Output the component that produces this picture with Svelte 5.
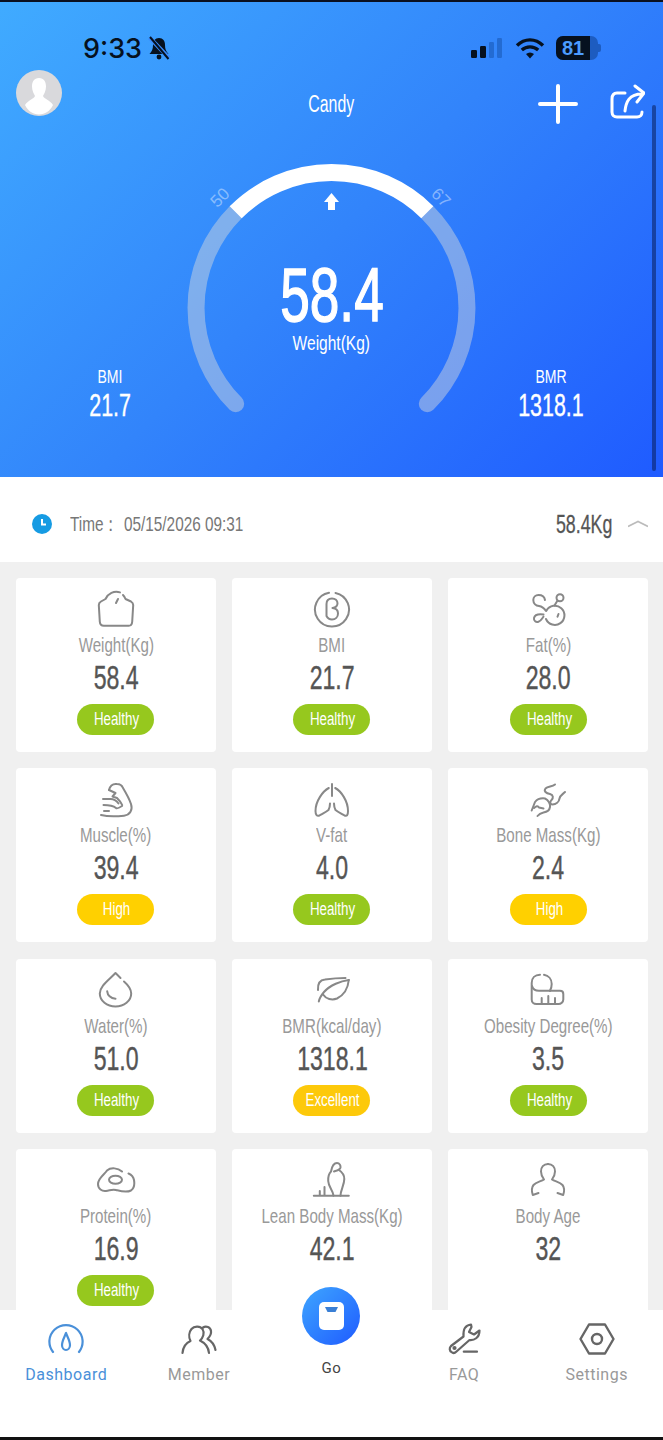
<script lang="ts">
	const metrics = [
		{ icon: 'weight', label: 'Weight(Kg)', value: '58.4', status: 'Healthy', tone: 'green' },
		{ icon: 'bmi', label: 'BMI', value: '21.7', status: 'Healthy', tone: 'green' },
		{ icon: 'fat', label: 'Fat(%)', value: '28.0', status: 'Healthy', tone: 'green' },
		{ icon: 'muscle', label: 'Muscle(%)', value: '39.4', status: 'High', tone: 'yellow' },
		{ icon: 'lungs', label: 'V-fat', value: '4.0', status: 'Healthy', tone: 'green' },
		{ icon: 'bone', label: 'Bone Mass(Kg)', value: '2.4', status: 'High', tone: 'yellow' },
		{ icon: 'water', label: 'Water(%)', value: '51.0', status: 'Healthy', tone: 'green' },
		{ icon: 'leaf', label: 'BMR(kcal/day)', value: '1318.1', status: 'Excellent', tone: 'amber' },
		{ icon: 'tape', label: 'Obesity Degree(%)', value: '3.5', status: 'Healthy', tone: 'green' },
		{ icon: 'egg', label: 'Protein(%)', value: '16.9', status: 'Healthy', tone: 'green' },
		{ icon: 'lean', label: 'Lean Body Mass(Kg)', value: '42.1', status: '', tone: '' },
		{ icon: 'age', label: 'Body Age', value: '32', status: '', tone: '' }
	];
</script>

{#snippet metricIcon(name: string)}
	<svg class="metric-icon" viewBox="0 0 40 40" fill="none" stroke="#888" stroke-width="2" stroke-linecap="round" stroke-linejoin="round">
		{#if name === 'weight'}
			<path d="M24 3.4C18 1.5 12 4.5 9.5 10L5 12.5C3.4 13.4 2.8 14.4 2.8 16L3.8 32.7C4 35.4 5.5 36.7 7.8 36.7H32.8C35 36.7 36 35.4 36.2 32.7L37.2 16C37.2 14.4 36.5 13.4 35 12.5L29.5 10C29 8.5 28 7 27 6" />
			<path d="M22 10 20 14" />
		{:else if name === 'bmi'}
			<path d="M23.5 3.9A17 17 0 1 1 17 3.8" />
			<path d="M14.5 27V15C14.5 11 17 9.5 20 9.5C23.2 9.5 25.5 11.5 25.5 14.3C25.5 16.8 23.6 18.6 20.5 19C23.8 19.3 26 21.3 26 24.5C26 28 23.4 30.5 20 30.5C17.4 30.5 15.5 29 14.5 27Z" />
		{:else if name === 'fat'}
			<path d="M17 11C16.5 8 14 6 10.5 6C7.5 6 5.3 8 5.3 11C5.3 14.5 8 16.7 11 17C14 17.5 16 19 18 22" />
			<path d="M15.5 25.5C12 25 7 25 6 29C5.5 32 8 33.5 10.5 32.7C13 32 14 29.5 15.5 27.7" />
			<path d="M18.5 21.5A9.6 9.6 0 1 1 18 30" />
			<circle cx="32" cy="8.7" r="3.5" />
			<path d="M29.5 11.5 26.5 16.5M30.5 25 29.5 27.7" />
		{:else if name === 'muscle'}
			<path d="M13 11C14 7 17 4.5 21 5C24 5 26 6.5 27 9C30 14 33 19 35 25C37 31 34 36 28 36.7C21 37.5 11 37.5 5 36" />
			<path d="M13 11 19.5 14 16.5 17.5 21 19C23 21 25 23 26.2 26" />
			<path d="M7 20H14.5C17 20 20 21 22.5 24.5M7.5 26C12 26 17 26.5 20 29C21 30 23 29 26 27M8 32H13" />
		{:else if name === 'lungs'}
			<path d="M20 5V17" />
			<path d="M16.8 9C11 12 3.5 22 3.5 32C3.5 36 5 37.5 7.5 36.5C10 35 14 33 16.5 31C17.5 29 18 27 18 24.5" />
			<path d="M23.2 9C29 12 36 22 36 32C36 36 35 37.5 32.5 36.5C30 35 26 33 23.5 31C22.5 29 22 27 22 24.5" />
		{:else if name === 'bone'}
			<path d="M27 5.5C24 8 20 7 17.5 9.5C15.5 12 18 14.5 22 15C25.5 16 25.5 19 23.5 21C21.5 23 22 25.5 24.5 25.5C28 25.5 31 23 31.5 19.5C32 16.5 34.5 15.5 37 13" />
			<path d="M3.7 31.5 7 23C9 20.5 13 19 17 19.5C20.5 21 22.5 25 22 28C21.5 31.5 19 33 15.5 33.5C13 34 11 35 9.5 37" />
			<path d="M6 29C8 27 10 26.5 11 28.5L15.5 29.5" />
		{:else if name === 'water'}
			<path d="M28 11.5C32 15 35.2 19 35.2 23.5C35.2 31 28 36.5 19.5 36.5C11 36.5 3.8 31 3.8 23.5C3.8 16 13 10 19.5 3L24.5 8" />
			<path d="M11.2 21.3C11.5 25 14.5 28.5 19.5 28.7" />
		{:else if name === 'leaf'}
			<path d="M6 20C5.5 13 8 10 13 9.5C20 8.5 27 8 33.5 8" />
			<path d="M36.8 10C29 11 18 15 12 22C9.5 25 7.5 28 6.8 31.5" />
			<path d="M36.8 10C36 18 32 25 25 28.5C20 30.5 14 29 11 24.5" />
		{:else if name === 'tape'}
			<path d="M12 4.7C7 4.7 3.7 8 3.7 13V29.5C3.7 32 5.5 34 8.5 34H30.5C33 34 35.3 32 35.3 29.5V24C35.3 22 34 20.8 32 20.8H22" />
			<path d="M16 4.8C20.5 5.5 23.7 9 23.7 14C23.7 17 23 19 22 20.8" />
			<path d="M4 16C5 19.5 8 20.8 11 20.8H22M13.7 34V28M20.3 34V26M27 34V28" />
		{:else if name === 'egg'}
			<path d="M26 11.5C22 8 15 7 11 10.5C9 14 2 18 2 24C2 29 6 31.5 10 31C14 30.5 16 29 20 30C24 31 30 33 35 30.5C39 28 38.5 23 38 20C37.5 17 36 15 32.5 13.5" />
			<ellipse cx="19.5" cy="19.7" rx="6.5" ry="4" />
		{:else if name === 'lean'}
			<path d="M21.5 35.7C21 30 16.5 27 16.2 21C16 16 17.5 13 19 11.5C20 6 22 3 25 3C27.5 3 28.8 5.5 28.5 7.5C28 10 25 10.5 22 11.5" />
			<path d="M27 10C30 12 32.3 15 32.3 19C32.3 25 28.5 30 28.5 35.7" />
			<path d="M1.8 35.7H36.8M7.8 35.7V31M12.5 35.7V27" />
		{:else if name === 'age'}
			<path d="M20 4C15.5 4 13 7.5 13 11.5C13 15 14.5 17.5 16 19.5C13 21.5 8 22 5.5 25C3.5 27.5 3.5 31 4.8 35L10.5 33" />
			<path d="M20 4C24.5 4 27 7.5 27 11.5C27 15 25.5 17.5 24 19.5C27 21.5 32 22 34.5 25C36.5 27.5 36.5 31 35.2 35L29.5 33" />
		{/if}
	</svg>
{/snippet}

<div class="page">
	<section class="hero">
		<div class="status">
			<div class="status-left">
				<span class="clock-text">9:33</span>
				<svg width="24" height="24" viewBox="0 0 24 24">
					<path d="M12 2C8 2 6 5 6 9C6 13 5 15 2.5 18H21.5C19 15 18 13 18 9C18 5 16 2 12 2Z" fill="#06111f" />
					<circle cx="12" cy="21" r="2.4" fill="#06111f" />
					<path d="M2.5 1.5 22 22" stroke="#3a8cff" stroke-width="4" />
					<path d="M3 1 21.5 23" stroke="#06111f" stroke-width="2" />
				</svg>
			</div>
			<div class="status-right">
				<svg width="34" height="22" viewBox="0 0 34 22">
					<rect x="1" y="13" width="6" height="8" rx="1.2" fill="#06111f" />
					<rect x="10" y="9" width="6" height="12" rx="1.2" fill="#06111f" />
					<rect x="19" y="5" width="5" height="16" rx="1.2" fill="#1d5fc0" opacity=".7" />
					<rect x="27" y="1" width="5" height="20" rx="1.2" fill="#1d5fc0" opacity=".7" />
				</svg>
				<svg width="30" height="22" viewBox="0 0 30 22" fill="none" stroke="#06111f" stroke-width="3.4">
					<path d="M2 8.5C9.5 1 20.5 1 28 8.5M6.8 13C11.5 8.8 18.5 8.8 23.2 13" />
					<path d="M11 17C13.5 15 16.5 15 19 17L15 21.5Z" fill="#06111f" stroke="none" />
				</svg>
				<div class="battery"><span class="battery-fill">81</span></div>
				<span class="battery-cap"></span>
			</div>
		</div>

		<div class="nav">
			<div class="avatar">
				<svg width="46" height="46" viewBox="0 0 46 46">
					<circle cx="23" cy="23" r="23" fill="#d9d9dc" />
					<path d="M23 8C18 8 16 12 16 16.5C16 21 18 24 19 26C18 29 12 30 9 35C12 41 17 44.5 23 44.5C29 44.5 34 41 37 35C34 30 28 29 27 26C28 24 30 21 30 16.5C30 12 28 8 23 8Z" fill="#fff" />
				</svg>
			</div>
			<span class="name"><span class="din">Candy</span></span>
			<div class="nav-actions">
				<svg width="40" height="40" viewBox="0 0 40 40" stroke="#fff" stroke-width="4" stroke-linecap="round">
					<path d="M20 2V38M2 20H38" />
				</svg>
				<svg width="36" height="38" viewBox="0 0 36 38" fill="none" stroke="#fff" stroke-width="3" stroke-linecap="round" stroke-linejoin="round">
					<path d="M16 9H8C5 9 3 11 3 15V28C3 31 5 33 8 33H28C31 33 33 31 33 28" />
					<path d="M16 27C17 18 20 10 33 10M26 2 35 9 28 18" />
				</svg>
			</div>
		</div>

		<div class="summary">
			<div class="side">
				<span class="side-label"><span class="din">BMI</span></span>
				<span class="side-value"><span class="din">21.7</span></span>
			</div>
			<div class="gauge">
				<svg width="320" height="280" viewBox="0 0 320 280" fill="none" stroke-width="17">
					<path d="M63.7 257.8A135.5 135.5 0 0 1 63.7 66.2" stroke="#dcdcdc" stroke-opacity=".45" stroke-linecap="round" />
					<path d="M255.3 66.2A135.5 135.5 0 0 1 255.3 257.8" stroke="#dcdcdc" stroke-opacity=".45" stroke-linecap="round" />
					<path d="M63.7 66.2A135.5 135.5 0 0 1 255.3 66.2" stroke="#fff" />
					<path d="M159.5 47 167 56H163V64H156V56H152Z" fill="#fff" stroke="none" />
				</svg>
				<span class="mark mark-low">50</span>
				<span class="mark mark-high">67</span>
				<div class="reading">
					<span class="reading-value"><span class="din">58.4</span></span>
					<span class="reading-label"><span class="din">Weight(Kg)</span></span>
				</div>
			</div>
			<div class="side">
				<span class="side-label"><span class="din">BMR</span></span>
				<span class="side-value"><span class="din">1318.1</span></span>
			</div>
		</div>
		<span class="scrollbar"></span>
	</section>

	<section class="time-row">
		<svg width="20" height="20" viewBox="0 0 20 20">
			<circle cx="10" cy="10" r="10" fill="#169be3" />
			<path d="M10 5V10.5H14" fill="none" stroke="#fff" stroke-width="2" />
		</svg>
		<span class="time-label"><span class="din-left">Time：</span></span>
		<span class="time-date"><span class="din-left">05/15/2026 09:31</span></span>
		<span class="time-weight"><span class="din-right">58.4Kg</span></span>
		<svg width="20" height="8" viewBox="0 0 20 8" fill="none" stroke="#bbb" stroke-width="1.6">
			<path d="M0 6.5 10 1.5 20 6.5" />
		</svg>
	</section>

	<section class="grid-wrap">
		<div class="grid">
			{#each metrics as m}
				<article class="card">
					{@render metricIcon(m.icon)}
					<span class="card-label"><span class="din">{m.label}</span></span>
					<span class="card-value"><span class="din">{m.value}</span></span>
					{#if m.status}
						<span class="pill {m.tone}"><span class="din">{m.status}</span></span>
					{/if}
				</article>
			{/each}
		</div>
	</section>

	<nav class="tabs">
		<div class="tab active">
			<svg width="36" height="36" viewBox="0 0 36 36" fill="none" stroke="#4a90d9" stroke-width="2.2" stroke-linecap="round" stroke-linejoin="round">
				<path d="M5 29A16.6 16.6 0 1 1 31 29" />
				<path d="M18 10C16.5 14 14 18 14 22C14 25 16 27 18 27C20 27 22 25 22 22C22 18 19.5 14 18 10Z" />
			</svg>
			<span>Dashboard</span>
		</div>
		<div class="tab">
			<svg width="36" height="36" viewBox="0 0 36 36" fill="none" stroke="#666" stroke-width="2.2" stroke-linecap="round" stroke-linejoin="round">
				<path d="M1.5 30C2 24 5 20 9.5 18C7.5 14 8 9 10.5 6C13 3 19 2.5 21.5 6C24 10 22 15 19 17.5C24 20 27.5 24 28 30" />
				<path d="M22 4.5C25 2.5 29.5 4 30 8C30.5 11.5 28.5 14 26.5 16C30.5 18 33.5 22 34.5 27" />
			</svg>
			<span>Member</span>
		</div>
		<div class="tab go">
			<div class="go-button">
				<svg width="25" height="28" viewBox="0 0 25 28">
					<rect width="25" height="28" rx="5" fill="#fff" />
					<path d="M6 5H19L16.5 10H8.5Z" fill="#3a7fd5" />
				</svg>
			</div>
			<span>Go</span>
		</div>
		<div class="tab">
			<svg width="36" height="36" viewBox="0 0 36 36" fill="none" stroke="#666" stroke-width="2.2" stroke-linecap="round" stroke-linejoin="round">
				<path d="M25 1.5C20 2 17 6 17.5 13.5L5 23C3 25 3.5 28 5.5 29C7 30.5 9 30 10.5 28.5L23.5 17C28 17.5 33.5 15 33.5 7.5L28 11.5L23 9L25.5 4Z" />
				<circle cx="8.5" cy="25" r="1" />
				<path d="M17.8 28.7H31" />
			</svg>
			<span>FAQ</span>
		</div>
		<div class="tab">
			<svg width="36" height="36" viewBox="0 0 36 36" fill="none" stroke="#666" stroke-width="2.4" stroke-linejoin="round">
				<path d="M10 1.5H26L34.5 16L26 30.5H10L1.5 16Z" />
				<circle cx="18" cy="16" r="5" />
			</svg>
			<span>Settings</span>
		</div>
	</nav>
</div>

<style>
	:global(body) {
		margin: 0;
		background: #fff;
	}

	.page {
		display: flex;
		flex-direction: column;
		height: 1440px;
		overflow: hidden;
		font-family: 'Liberation Sans', sans-serif;
		border-top: 2px solid #0a1020;
		border-bottom: 3px solid #111;
		box-sizing: border-box;
	}

	/* No condensed face is installed, so the DIN look comes from squeezing Liberation Sans. */
	.din,
	.din-left,
	.din-right {
		display: inline-block;
		white-space: nowrap;
		transform: scaleX(0.74);
	}

	.din-left {
		transform-origin: left center;
	}

	.din-right {
		transform-origin: right center;
	}

	.hero {
		position: relative;
		flex: none;
		display: flex;
		flex-direction: column;
		height: 475px;
		background: linear-gradient(135deg, #40abff 0%, #3284fb 50%, #1f5bff 100%);
		color: #fff;
	}

	.status {
		display: flex;
		justify-content: space-between;
		align-items: center;
		height: 30px;
		margin-top: 31px;
		padding: 0 62px 0 83px;
	}

	.status-left {
		display: flex;
		align-items: center;
		gap: 5px;
	}

	.clock-text {
		font-family: 'Inter', sans-serif;
		font-size: 27px;
		font-weight: 500;
		color: #06111f;
	}

	.status-right {
		display: flex;
		align-items: center;
		gap: 10px;
	}

	.status-right svg:first-child {
		margin-right: 1px;
	}

	.battery {
		width: 42px;
		height: 24px;
		border-radius: 7px;
		overflow: hidden;
		background: #1d5cc0;
		margin-left: 1px;
	}

	.battery-fill {
		display: block;
		width: 34px;
		height: 24px;
		background: #06111f;
		color: #4c9cff;
		font-size: 20px;
		font-weight: 700;
		line-height: 24px;
		text-align: center;
	}

	.battery-cap {
		width: 3px;
		height: 8px;
		margin-left: -10px;
		border-radius: 0 2px 2px 0;
		background: #1d5cc0;
	}

	.nav {
		display: grid;
		grid-template-columns: 1fr auto 1fr;
		align-items: start;
		padding: 7px 16px 0;
		height: 56px;
	}

	.avatar {
		height: 46px;
	}

	.name {
		margin-top: 21px;
		font-size: 23px;
	}

	.name .din {
		transform: scaleX(0.69);
	}

	.nav-actions {
		display: flex;
		justify-content: flex-end;
		gap: 31px;
		margin: 14px 2px 0 0;
	}

	.summary {
		display: grid;
		grid-template-columns: 1fr 320px 1fr;
		margin-top: 20px;
	}

	.side {
		display: flex;
		flex-direction: column;
		align-items: center;
		margin-top: 221px;
		line-height: 1;
	}

	.summary .side:first-child {
		padding-left: 48px;
	}

	.summary .side:last-child {
		padding-right: 52px;
	}

	.side-label {
		font-size: 19px;
	}

	.side-value {
		margin-top: 3px;
		font-size: 32px;
		-webkit-text-stroke: 0.4px #fff;
	}

	.side-value .din {
		transform: scaleX(0.67);
	}

	.gauge {
		position: relative;
		height: 280px;
	}

	.gauge svg {
		display: block;
	}

	.mark {
		position: absolute;
		font-size: 17px;
		color: rgba(255, 255, 255, 0.42);
	}

	.mark-low {
		left: 39px;
		top: 42px;
		transform: rotate(-45deg);
	}

	.mark-high {
		left: 259px;
		top: 42px;
		transform: rotate(45deg);
	}

	.reading {
		position: absolute;
		inset: 0;
		display: flex;
		flex-direction: column;
		align-items: center;
		padding-top: 114px;
	}

	.reading-value {
		font-size: 76px;
		line-height: 70px;
		-webkit-text-stroke: 1.4px #fff;
	}

	.reading-value .din {
		transform: scaleX(0.7);
	}

	.reading-label {
		font-size: 21px;
		line-height: 26px;
	}

	.scrollbar {
		position: absolute;
		right: 7px;
		top: 103px;
		bottom: 6px;
		width: 4px;
		border-radius: 2px;
		background: rgba(10, 30, 90, 0.55);
	}

	.time-row {
		flex: none;
		display: flex;
		align-items: center;
		height: 85px;
		padding: 9px 15px 0 32px;
		box-sizing: border-box;
		color: #777;
		background: #fff;
	}

	.time-label {
		width: 54px;
		margin-left: 18px;
		font-size: 21px;
	}

	.time-date {
		font-size: 21px;
	}

	.time-label .din-left,
	.time-date .din-left {
		transform: scaleX(0.73);
	}

	.time-weight {
		margin-left: auto;
		margin-right: 16px;
		font-size: 26px;
		color: #555;
		-webkit-text-stroke: 0.3px #555;
	}

	.time-weight .din-right {
		transform: scaleX(0.685);
	}

	.grid-wrap {
		flex: 1;
		min-height: 0;
		overflow: hidden;
		background: #f0f0f0;
		padding: 16px 15px 0 16px;
	}

	.grid {
		display: grid;
		grid-template-columns: repeat(3, 1fr);
		column-gap: 16.5px;
		row-gap: 16.3px;
	}

	.card {
		display: flex;
		flex-direction: column;
		align-items: center;
		height: 174px;
		padding-top: 11px;
		box-sizing: border-box;
		border-radius: 4px;
		background: #fff;
	}

	.metric-icon {
		width: 40px;
		height: 40px;
		flex: none;
	}

	.card-label {
		margin-top: 3px;
		font-size: 21px;
		line-height: 26px;
		color: #999;
	}

	.card-label .din {
		transform: scaleX(0.72);
	}

	.card-value {
		margin-top: 1px;
		font-size: 33px;
		line-height: 38px;
		color: #555;
		-webkit-text-stroke: 0.4px #555;
	}

	.card-value .din {
		transform: scaleX(0.7);
	}

	.pill {
		display: flex;
		justify-content: center;
		width: 77px;
		height: 31px;
		margin-top: 7px;
		padding-left: 2px;
		box-sizing: border-box;
		border-radius: 16px;
		font-size: 18px;
		line-height: 31px;
		color: #fff;
	}

	.green {
		background: #96c81e;
	}

	.yellow {
		background: #ffd000;
	}

	.amber {
		background: #fdc90a;
	}

	.tabs {
		position: relative;
		flex: none;
		display: grid;
		grid-template-columns: repeat(5, 1fr);
		height: 127px;
		background: #fff;
		font-family: 'Roboto', sans-serif;
	}

	.tab {
		display: flex;
		flex-direction: column;
		align-items: center;
		padding-top: 13px;
		font-size: 16px;
		letter-spacing: 0.5px;
		color: #999;
	}

	.tab span {
		margin-top: 6px;
	}

	.tab.active {
		color: #4a90d9;
	}

	.tab.go {
		color: #444;
		font-size: 15px;
		padding-top: 0;
	}

	.go-button {
		display: flex;
		align-items: center;
		justify-content: center;
		width: 58px;
		height: 58px;
		margin-top: -23px;
		border-radius: 50%;
		background: linear-gradient(135deg, #3ea6ff, #1f5bff);
	}

	.tab.go span {
		margin-top: 14px;
	}
</style>
